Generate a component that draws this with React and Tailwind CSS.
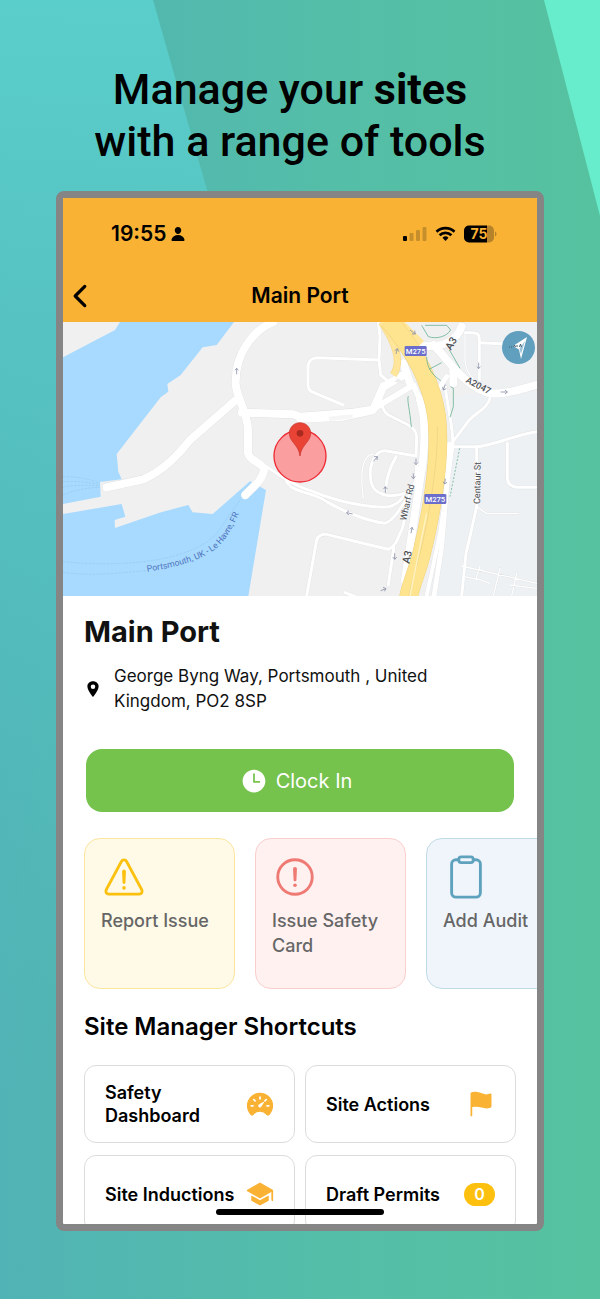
import React from 'react';
import {
  IoAlertCircleOutline,
  IoChevronBack,
  IoClipboardOutline,
  IoFlag,
  IoLocationSharp,
  IoPerson,
  IoSchool,
  IoSpeedometer,
  IoTime,
  IoWarningOutline,
} from 'react-icons/io5';

const quickActions = [
  {
    label: 'Report Issue',
    icon: IoWarningOutline,
    card: 'bg-[#fff9e7] border-[#fbe6a0]',
    iconColor: 'text-[#fcc10f]',
  },
  {
    label: 'Issue Safety Card',
    icon: IoAlertCircleOutline,
    card: 'bg-[#fff1f0] border-[#f9cfce]',
    iconColor: 'text-[#ee7a73]',
  },
  {
    label: 'Add Audit',
    icon: IoClipboardOutline,
    card: 'bg-[#f0f5fc] border-[#bfdbe6]',
    iconColor: 'text-[#5fa2bd]',
  },
];

const shortcuts = [
  { label: 'Safety Dashboard', icon: IoSpeedometer },
  { label: 'Site Actions', icon: IoFlag },
  { label: 'Site Inductions', icon: IoSchool },
  { label: 'Draft Permits', count: 0 },
];

const Backdrop = () => (
  <svg
    className="absolute inset-0 h-full w-full"
    viewBox="0 0 600 1299"
    preserveAspectRatio="none"
    aria-hidden="true"
  >
    <defs>
      <linearGradient id="base" x1="0" y1="0" x2="1" y2="0">
        <stop offset="0" stopColor="#51b3b5" />
        <stop offset="0.55" stopColor="#54bea8" />
        <stop offset="1" stopColor="#56c29f" />
      </linearGradient>
      <linearGradient id="leftBeam" x1="0" y1="0" x2="0" y2="1">
        <stop offset="0" stopColor="#5acecb" />
        <stop offset="0.5" stopColor="#54bfc0" stopOpacity="0.6" />
        <stop offset="0.9" stopColor="#51b3b5" stopOpacity="0" />
      </linearGradient>
    </defs>
    <rect width="600" height="1299" fill="url(#base)" />
    <path d="M0 0H153L215 218L520 1299H0Z" fill="url(#leftBeam)" />
    <path d="M544 0H600V216Z" fill="#67edcb" />
  </svg>
);

const StatusBar = () => (
  <div className="flex h-[71px] items-center justify-between pl-12 pr-10">
    <div className="flex items-center gap-1 text-[21px] font-semibold leading-7">
      <span>19:55</span>
      <IoPerson className="size-4" aria-hidden="true" />
    </div>
    <svg className="h-[18px] w-[94px]" viewBox="0 0 94 18" aria-label="Signal, wifi and battery">
      <rect x="0" y="11" width="4" height="5" rx="1" />
      <g fill="#c78f2c">
        <rect x="6.500" y="8" width="4" height="8" rx="1" />
        <rect x="13" y="5" width="4" height="11" rx="1" />
        <rect x="19.500" y="2" width="4" height="14" rx="1" />
      </g>
      <g fill="none" stroke="#000" strokeWidth="2.700">
        <path d="M33.500 6.800a12.800 12.800 0 0 1 18 0" />
        <path d="M36.600 10.300a8.400 8.400 0 0 1 11.800 0" />
      </g>
      <path d="M42.500 16l-3-3.200a4.300 4.300 0 0 1 6 0z" />
      <path d="M66 .5h18v17H66a5 5 0 0 1-5-5v-7a5 5 0 0 1 5-5z" />
      <path d="M84 .5h2a5 5 0 0 1 5 5v7a5 5 0 0 1-5 5h-2z" fill="#b6832b" />
      <path d="M92 6.500c2 .8 2 4.200 0 5z" fill="#b6832b" />
      <text x="76" y="14" textAnchor="middle" className="fill-[#f9b234] font-[Inter] text-[14px] font-bold">
        75
      </text>
    </svg>
  </div>
);

// two passes over the same roads, a grey casing first and the white fill on top
const Roads = ({ stroke, extra }) => (
  <g fill="none" stroke={stroke} strokeLinejoin="round" strokeLinecap="round">
    <g strokeWidth={9 + extra}>
      <path d="M955 6L960 50L957 120L962 165L985 185" />
      <path d="M957 120L772 113C750 115 742 128 744 150L744 195C744 205 750 214 762 218L850 255" />
      <path d="M965 192C960 230 962 270 985 285L1045 315C1062 325 1070 335 1070 352L1068 408L975 392C945 390 925 440 932 478C935 510 960 525 990 527C1030 525 1060 515 1068 480L1070 430" />
      <path d="M1008 410C985 450 978 480 977 512" />
      <path d="M620 440C680 480 700 495 760 515C830 545 930 565 985 560C1010 555 1020 545 1030 530" />
      <path d="M680 485C700 520 760 515 800 545C860 580 930 605 975 610C1000 600 1020 570 1050 520" />
      <path d="M740 828L770 660C775 645 785 642 800 643L930 675L985 688C1005 680 1012 660 1020 640C1035 620 1038 560 1042 530" />
      <path d="M1002 680L990 760L985 795" />
      <path d="M855 818L900 835" />
      <path d="M1175 380H1250C1300 378 1360 345 1431 335" />
      <path d="M1250 380V560L1232 640L1218 700L1205 828" />
      <path d="M1342 370V470C1342 490 1350 500 1370 502H1431" />
      <path d="M1290 235C1280 270 1240 280 1220 310L1175 370" />
      <path d="M1258 180V60C1258 40 1250 38 1230 38H1215" />
      <path d="M1258 68L1340 72" />
      <path d="M1156 200C1165 280 1180 320 1178 370" />
    </g>
    <g strokeWidth={4 + extra}>
      <path d="M910 535C900 460 905 405 940 402" />
      <path d="M1250 560L1280 580H1375" />
      <path d="M1205 738L1431 790M1320 745L1300 828M1260 738L1248 775L1290 790M1370 760L1355 828M1350 795L1431 805M1215 770L1250 778" />
      <path d="M1215 45V120C1218 150 1225 165 1240 175" />
    </g>
    <g strokeWidth={15 + extra}>
      <path d="M1168 372L1160 500L1145 680L1122 828" />
      <path d="M1160 170L1130 215" />
    </g>
    <g strokeWidth={24 + extra}>
      <path d="M640 6C580 30 525 100 527 190C527 230 562 270 564 330V400C570 425 612 430 612 450C608 480 580 500 556 525" />
      <path d="M140 502L250 478C310 450 350 410 390 360L525 242" />
      <path d="M545 278L700 283L720 290L880 278L940 268L970 200L1040 160" />
      <path d="M720 296L850 290L935 272" />
      <path d="M935 270L1060 195L1085 250" strokeWidth={18 + extra} />
      <path d="M1030 130L1050 190" />
      <path d="M1080 240C1100 300 1095 400 1080 480L1035 780" />
      <path d="M1065 75C1150 90 1190 60 1205 20" />
      <path d="M1120 75C1160 110 1210 200 1290 220C1350 225 1400 200 1431 195" />
      <path d="M1180 150V190" />
    </g>
    <path d="M1178 372L1165 470L1140 640L1100 828" strokeWidth={12 + extra} />
  </g>
);

const Motorway = () => (
  <g fill="none">
    <path d="M1000 165C1030 120 1000 60 965 6" stroke="#f5d98b" strokeWidth="22" />
    <path d="M1000 165C1030 120 1000 60 965 6" stroke="#ffe69a" strokeWidth="18" />
    <path d="M1085 70L1020 6" stroke="#ffe69a" strokeWidth="20" />
    <path d="M985 0C1020 40 1110 150 1130 290C1145 420 1110 600 1085 700C1070 760 1050 800 1045 835" stroke="#f0d27c" strokeWidth="56" />
    <path d="M985 0C1020 40 1110 150 1130 290C1145 420 1110 600 1085 700C1070 760 1050 800 1045 835" stroke="#ffe48f" strokeWidth="53" />
    <path d="M1132 320C1135 430 1105 600 1080 700C1065 760 1052 800 1046 830" stroke="#e9cf86" strokeWidth="2" />
    <path d="M1100 580L1050 828" stroke="#fff3c4" strokeWidth="4" />
  </g>
);

const SiteMap = () => (
  <svg className="block w-full" viewBox="9 6 1422 822" role="img" aria-label="Map of Main Port">
    <rect x="9" y="6" width="1422" height="822" fill="#f0f0f0" />
    <path d="M1180 230L1431 190V828H1110L1165 480Z" fill="#eef1f3" />
    <path d="M1200 6H1431V190L1290 220L1200 150Z" fill="#eef0f2" />

    {/* harbour */}
    <g fill="#a8daff">
      <path d="M9 112L165 30L180 6H522L470 75L428 82L362 165L322 192L325 215L302 232L170 402L175 455L185 478L120 486L122 530L9 552Z" />
      <path d="M9 582L185 552L196 590L164 600L165 624L298 578L385 555L398 577L458 582L570 484L618 510L565 828H9Z" />
    </g>
    <g fill="none" stroke="#8fc3e8" strokeWidth="1.500" strokeDasharray="8 3">
      <path d="M9 470C60 470 90 478 120 490M9 485C60 482 90 488 120 494M9 502C50 492 90 496 120 498M9 525C50 508 90 502 120 502" />
      <path d="M9 725C200 745 400 720 470 640L540 540M9 757C100 770 180 758 260 752" />
    </g>

    <Roads stroke="#dfe1e3" extra={2} />
    <Roads stroke="#ffffff" extra={0} />
    <Motorway />
    <path d="M1003 185L1015 175L1035 192Z" fill="#ececec" />
    <path d="M805 290L878 283V295L808 303Z" fill="#f5f5f5" />

    {/* cycle paths */}
    <g fill="none" stroke="#6db596" strokeWidth="2.500">
      <path d="M1095 16H1160L1172 30C1160 50 1130 58 1105 50L1085 16" />
      <path d="M1100 110C1100 150 1125 170 1142 182M1107 148L1145 128" />
      <path d="M1045 228C1040 240 1050 270 1054 322" />
      <path d="M1172 200L1180 205V260L1170 292" />
      <path d="M1168 90L1180 110L1200 145" />
      <path d="M1199 385L1170 530" strokeDasharray="6 5" />
    </g>

    {/* one way arrows */}
    <g fill="none" stroke="#8b90a8" strokeWidth="2.500">
      <path d="M530 163V145M525 151L530 145L535 151" />
      <path d="M1008 102L1012 86M1004 92L1012 86L1016 95" />
      <path d="M1050 30L1066 42M1064 32L1066 42L1056 42" />
      <path d="M1256 128V146M1251 140L1256 146L1261 140" />
      <path d="M1322 216H1342M1335 210L1342 216L1335 222" />
      <path d="M878 582L860 578M867 572L860 578L866 585" />
      <path d="M976 518V500M971 507L976 500L982 507" />
      <path d="M940 424L952 410M942 410L952 410L951 420" />
      <path d="M1068 416V434M1062 427L1068 434L1074 427" />
      <path d="M1060 460V476M1054 469L1060 476L1066 469" />
      <path d="M1156 476L1154 492M1149 485L1154 492L1161 487" />
      <path d="M1053 640L1056 622M1050 628L1056 622L1060 630" />
      <path d="M1004 700V718M998 711L1004 718L1010 711" />
      <path d="M962 812L978 806M969 802L978 806L973 814" />
      <path d="M1156 194L1150 210M1148 201L1150 210L1159 206" />
    </g>

    <g className="font-[Roboto]" fill="#4a4d52" fontSize="27" fontWeight="500">
      <text transform="translate(1172 92) rotate(-58)" fontSize="31">A3</text>
      <text transform="translate(1216 186) rotate(28)">A2047</text>
      <text transform="translate(1048 732) rotate(-78)" fontSize="31">A3</text>
      <text transform="translate(1038 603) rotate(-77)" fontWeight="400">Wharf Rd</text>
      <text transform="translate(1260 552) rotate(-89)" fontWeight="400">Centaur St</text>
    </g>
    <path id="ferry" d="M262 755C350 742 430 720 475 680C510 645 530 600 554 540" fill="none" />
    <text className="font-[Roboto]" fill="#4f74bd" fontSize="26">
      <textPath href="#ferry">Portsmouth, UK - Le Havre, FR</textPath>
    </text>

    <g className="font-[Roboto]" fontSize="23" fontWeight="500" textAnchor="middle">
      <rect x="1034" y="78" width="66" height="30" rx="4" fill="#6b6fcb" />
      <text x="1067" y="101" fill="#fff">M275</text>
      <rect x="1093" y="522" width="66" height="30" rx="4" fill="#6b6fcb" />
      <text x="1126" y="545" fill="#fff">M275</text>
    </g>

    {/* site radius and marker */}
    <circle cx="720" cy="408" r="78" fill="#fb8f92" fillOpacity="0.85" stroke="#ee2b35" strokeWidth="4" />
    <path d="M720 308c-18 0-32 14-32 32 0 26 28 34 32 68 4-34 32-42 32-68 0-18-14-32-32-32z" fill="#e84335" stroke="#c5322a" strokeWidth="2" />
    <circle cx="720" cy="340" r="10" fill="#a92a20" />
  </svg>
);

const LocateButton = () => (
  <button
    type="button"
    aria-label="Open directions"
    className="absolute right-0.5 top-[9px] size-[33px] rounded-full bg-[#609fbe]"
  >
    <svg viewBox="0 0 33 33" className="size-full" aria-hidden="true">
      <path d="M25 6L11 15L17 18.500L19 28Z" fill="#fff" />
      <path d="M23 10L17.500 17.500L19 23Z" fill="#9cc4d8" />
      <path d="M7 16h1M9 16h1M11.500 16l1-2 1 2M15 16v-2M17.500 16l1-3 1 3" stroke="#3f5f70" fill="none" />
    </svg>
  </button>
);

export default function App() {
  return (
    <div className="relative bg-[#54bea8] px-14 pb-17 pt-[63px] font-[Inter,sans-serif] text-black">
      <Backdrop />

      <div className="relative">
        <h1 className="whitespace-nowrap pr-5 text-center font-[Roboto,sans-serif] text-[43px] font-medium leading-13">
          Manage your <span className="font-bold">sites</span>
          <br />
          with a range of tools
        </h1>

        {/* Phone */}
        <div className="relative mt-6 overflow-hidden rounded-lg border-[7px] border-[#858585] bg-white">
          <header className="bg-[#f9b234]">
            <StatusBar />
            <div className="grid h-[53px] grid-cols-[34px_1fr_34px] items-center">
              <button type="button" aria-label="Back">
                <IoChevronBack className="size-[34px]" />
              </button>
              <p className="text-center text-[21px] font-semibold leading-7">Main Port</p>
            </div>
          </header>

          <div className="relative">
            <SiteMap />
            <LocateButton />
          </div>

          <main className="px-[21px] pt-[18px]">
            <h2 className="text-[29px] font-bold leading-9 text-[#111]">Main Port</h2>
            <div className="mt-3.5 flex items-center gap-3 pr-10">
              <IoLocationSharp className="size-[18px] shrink-0" aria-hidden="true" />
              <p className="text-[17px] leading-[25px] text-[#111]">
                George Byng Way, Portsmouth , United Kingdom, PO2 8SP
              </p>
            </div>

            <div className="mt-[35px] px-0.5">
              <button
                type="button"
                className="flex h-[63px] w-full items-center justify-center gap-2 rounded-2xl bg-[#75c24d] pr-2 text-xl text-white"
              >
                <IoTime className="size-7" />
                Clock In
              </button>
            </div>

            {/* Quick actions */}
            <div className="-mr-[21px] mt-[26px] flex gap-5 overflow-hidden">
              {quickActions.map(({ label, icon: Icon, card, iconColor }) => (
                <button
                  key={label}
                  type="button"
                  className={`flex h-[151px] w-[151px] shrink-0 flex-col items-start rounded-2xl border px-4 py-[15px] text-left ${card}`}
                >
                  <Icon className={`size-[46px] ${iconColor}`} />
                  <span className="mt-2 text-lg font-medium leading-[25px] text-[#666]">{label}</span>
                </button>
              ))}
            </div>

            <h3 className="mt-[22px] text-2xl font-semibold leading-8">Site Manager Shortcuts</h3>
            <div className="-mb-[9px] mt-[22px] grid grid-cols-2 gap-x-2.5 gap-y-3">
              {shortcuts.map(({ label, icon: Icon, count }) => (
                <button
                  key={label}
                  type="button"
                  className="flex h-[78px] items-center justify-between gap-2 rounded-xl border border-[#dcdcdc] px-5 text-left text-lg font-semibold leading-[23px]"
                >
                  {label}
                  {Icon ? (
                    <Icon className="size-7 shrink-0 text-[#f9b234]" />
                  ) : (
                    <span className="flex h-[23px] w-[31px] items-center justify-center rounded-full bg-[#fdc00f] text-base text-white">
                      {count}
                    </span>
                  )}
                </button>
              ))}
            </div>
          </main>

          {/* Home indicator */}
          <div className="absolute bottom-[9px] left-1/2 h-1.5 w-[168px] -translate-x-1/2 rounded-full bg-black" />
        </div>
      </div>
    </div>
  );
}
